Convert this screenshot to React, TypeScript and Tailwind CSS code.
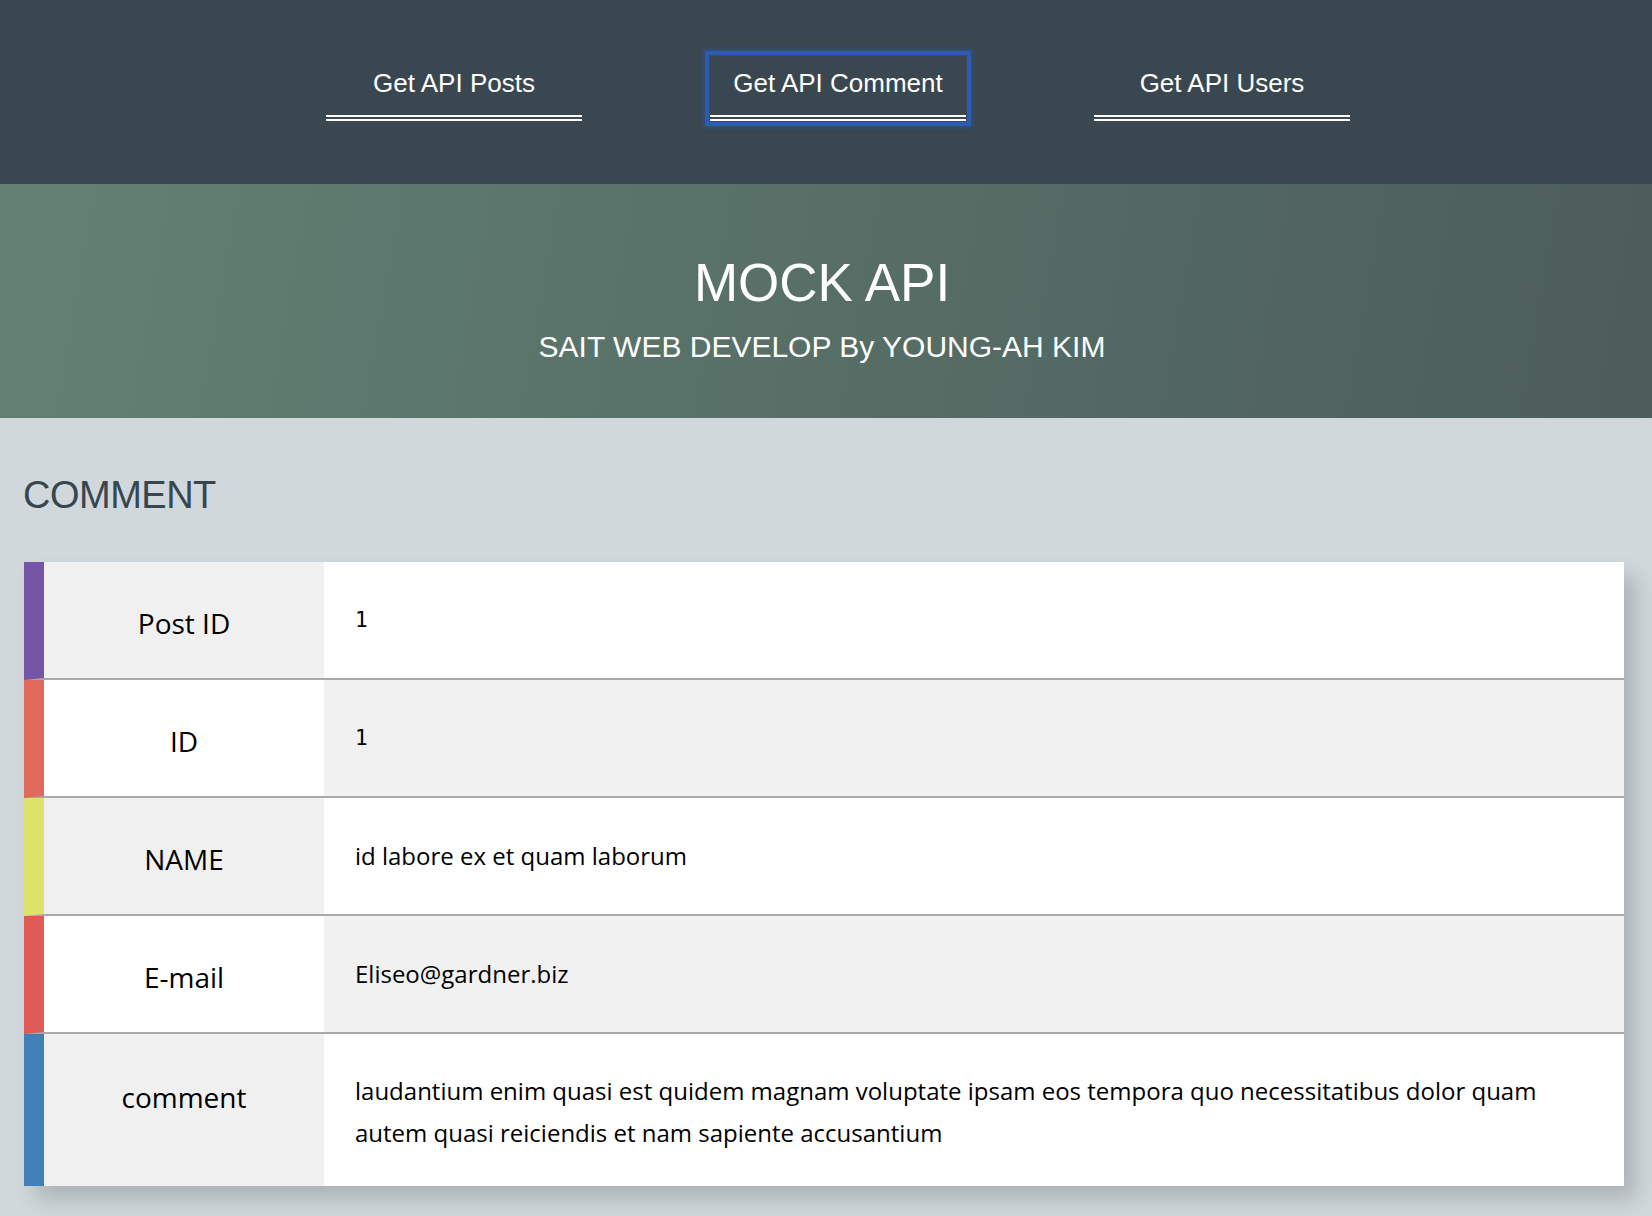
import React from "react";

type Row = {
  label: string;
  value: string;
  bar: string;
  odd: boolean;
  mono?: boolean;
  last?: boolean;
};

const rows: Row[] = [
  { label: "Post ID", value: "1", bar: "border-l-[#7455a6]", odd: true, mono: true },
  { label: "ID", value: "1", bar: "border-l-[#e06b5a]", odd: false, mono: true },
  { label: "NAME", value: "id labore ex et quam laborum", bar: "border-l-[#dde26b]", odd: true },
  { label: "E-mail", value: "Eliseo@gardner.biz", bar: "border-l-[#e05a55]", odd: false },
  {
    label: "comment",
    value:
      "laudantium enim quasi est quidem magnam voluptate ipsam eos tempora quo necessitatibus dolor quam autem quasi reiciendis et nam sapiente accusantium",
    bar: "border-l-[#4280b8]",
    odd: true,
    last: true,
  },
];

const navItems = ["Get API Posts", "Get API Comment", "Get API Users"];

const App: React.FC = () => {
  return (
    <div className="min-h-screen bg-[#d0d8dc] font-['Liberation_Sans',Arial,sans-serif]">
      {/* top nav */}
      <nav className="h-[184px] bg-[#3a4750] pt-[56px] pl-6 flex justify-center gap-32">
        {navItems.map((item) => (
          <button
            key={item}
            className={`w-[256px] h-[65px] pt-[12px] flex justify-center items-start text-[26px] leading-[30px] text-white border-b-[6px] border-double border-white ${
              item === "Get API Comment"
                ? "shadow-[0_0_0_1px_#3d4a5a,0_0_0_5px_#2c5bb6,0_0_4px_7px_rgba(44,91,182,0.4)]"
                : ""
            }`}
          >
            {item}
          </button>
        ))}
      </nav>

      {/* hero */}
      <header className="h-[234px] pt-[68px] pr-[8px] flex flex-col items-center text-white bg-[linear-gradient(100deg,#628174,#4c5c5a)]">
        <h1 className="text-[53px] leading-[61px]">MOCK API</h1>
        <p className="mt-[17px] text-[30px] leading-[34px]">
          SAIT WEB DEVELOP By YOUNG-AH KIM
        </p>
      </header>

      <main className="pt-[55px] pb-10">
        <h2 className="ml-[23px] text-[38px] leading-[44px] tracking-[-0.5px] text-[#37464f]">
          COMMENT
        </h2>

        <div className="mt-[45px] ml-6 mr-7 shadow-[12px_14px_20px_rgba(0,0,0,0.17)] font-['Open_Sans',sans-serif] text-black">
          {rows.map((row) => (
            <div
              key={row.label}
              className={`flex border-l-[20px] ${row.bar} ${
                row.last ? "h-[152px]" : "h-[118px] border-b-2 border-b-[#a9a9a9]"
              }`}
            >
              <div
                className={`w-[280px] shrink-0 flex items-center justify-center text-[28px] ${
                  row.last ? "pb-[26px]" : "pt-[5px]"
                } ${row.odd ? "bg-[#f0f0f0]" : "bg-white"}`}
              >
                {row.label}
              </div>
              <div
                className={`flex-1 flex items-center pl-[31px] pr-[31px] ${
                  row.last ? "pt-[3px]" : ""
                } ${row.odd ? "bg-white" : "bg-[#f1f1f1]"}`}
              >
                {row.mono ? (
                  <span className="font-['DejaVu_Sans_Mono',monospace] text-[21px] leading-[42px]">
                    {row.value}
                  </span>
                ) : (
                  <p className="text-[24px] leading-[42px]">{row.value}</p>
                )}
              </div>
            </div>
          ))}
        </div>
      </main>
    </div>
  );
};

export default App;
